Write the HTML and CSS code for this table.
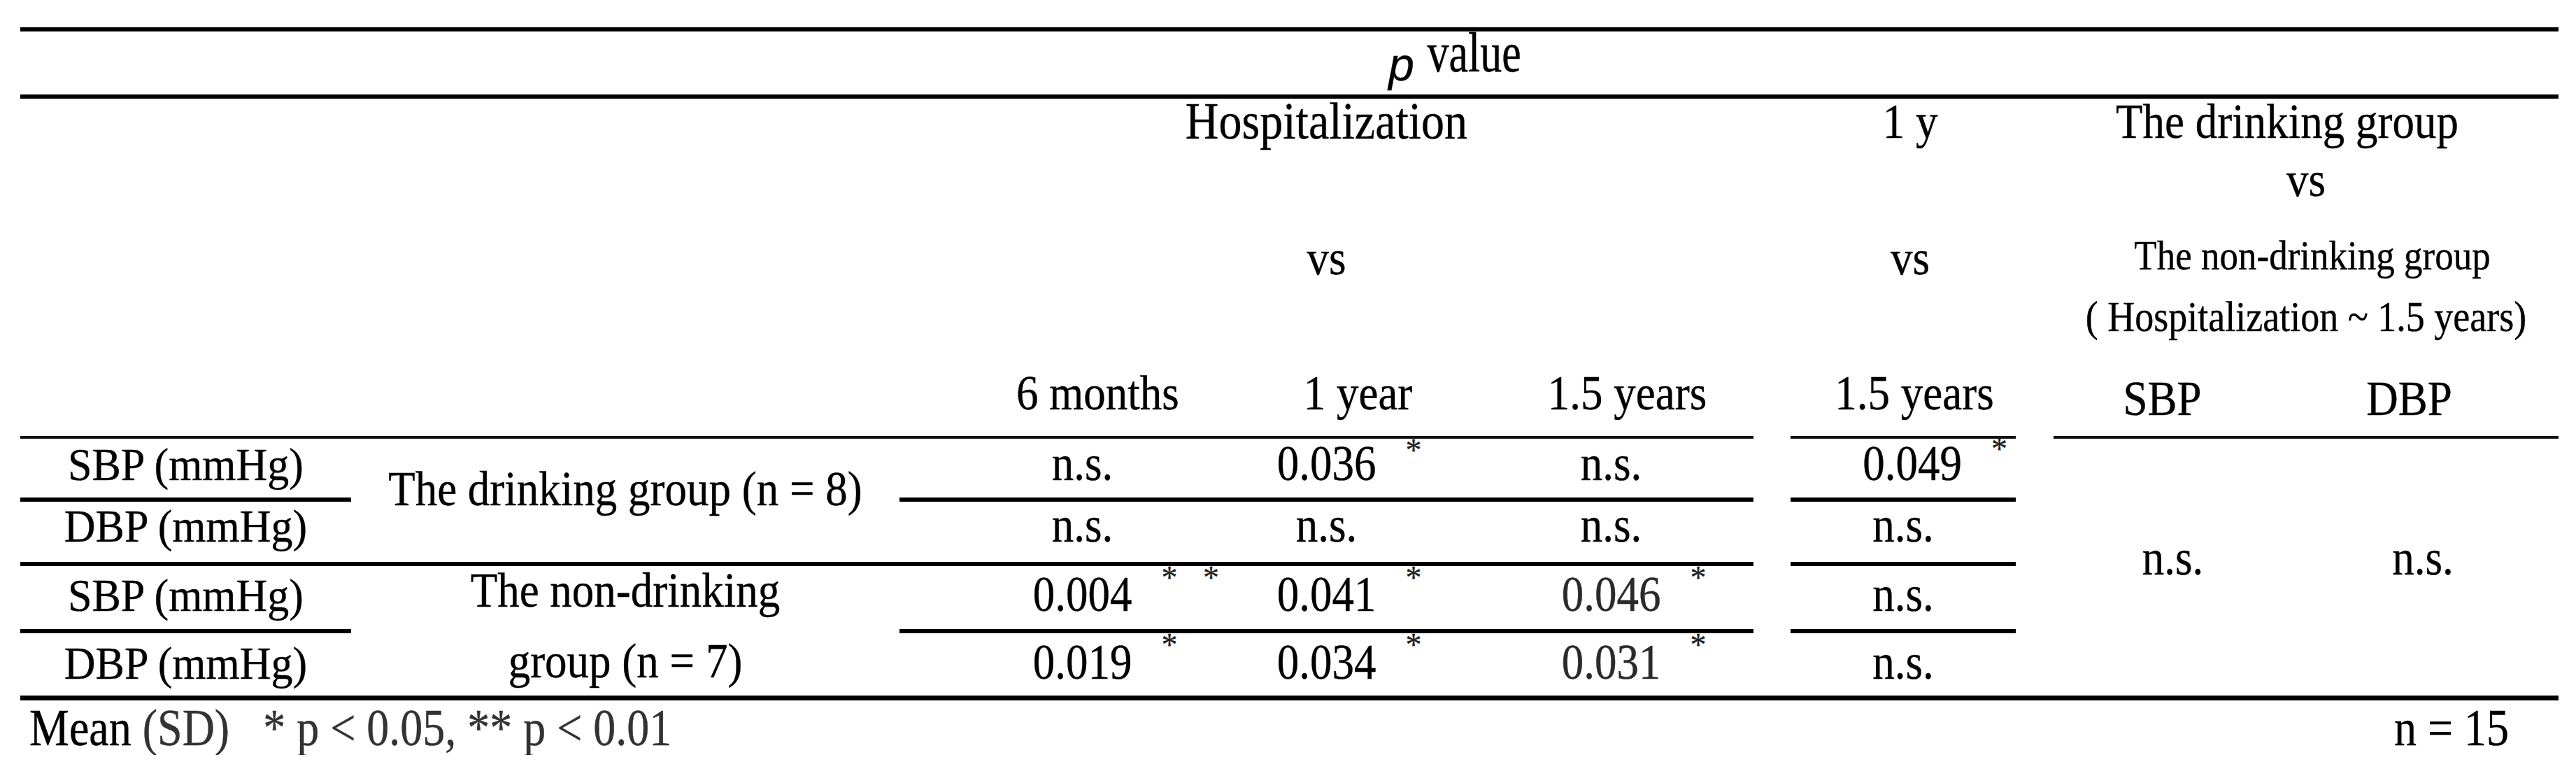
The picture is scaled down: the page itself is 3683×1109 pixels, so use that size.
FILE: index.html
```html
<!DOCTYPE html>
<html lang="en">
<head>
<meta charset="utf-8">
<title>p value table</title>
<link rel="stylesheet" href="styles.css">
</head>
<body>
<div class="tbl">
  <div class="rule c-all y1"></div>
  <div class="pv c-bh y2"><span class="pv-p">p</span> <span class="pv-v">value</span></div>
  <div class="rule c-all y3"></div>

  <div class="grp c-ce y4">
    <div class="hl big"><span class="t">Hospitalization</span></div>
    <div class="hl vs-gap"><span class="t">vs</span></div>
  </div>
  <div class="grp c-f y4 grp-f">
    <div class="hl"><span class="t">1 y</span></div>
    <div class="hl vs-gap"><span class="t">vs</span></div>
  </div>
  <div class="grp c-gh y4">
    <div class="hl g-first"><span class="t">The drinking group</span></div>
    <div class="hl g-vs"><span class="t">vs</span></div>
    <div class="hl g-non"><span class="t">The non-drinking group</span></div>
    <div class="hl g-range"><span class="t">( Hospitalization ~ 1.5 years)</span></div>
  </div>

  <div class="ch c-c y5 ch-c"><span class="t">6 months</span></div>
  <div class="ch c-d y5 ch-d"><span class="t">1 year</span></div>
  <div class="ch c-e y5 ch-e"><span class="t">1.5 years</span></div>
  <div class="ch c-f y5 ch-f"><span class="t">1.5 years</span></div>
  <div class="ch c-g y5 ch-g ch-bp"><span class="t">SBP</span></div>
  <div class="ch c-h y5 ch-h ch-bp"><span class="t">DBP</span></div>

  <div class="rule thin c-ae y6"></div>
  <div class="rule thin c-f y6"></div>
  <div class="rule thin c-gh y6"></div>

  <!-- row 1 -->
  <div class="lab c-a y7"><span class="t">SBP (mmHg)</span></div>
  <div class="d grpl c-b y7-9"><span class="t">The drinking group (n = 8)</span></div>
  <div class="d c-c y7 off-c"><span class="t">n.s.</span></div>
  <div class="d c-d y7"><span class="val"><span class="t">0.036</span><span class="star">*</span></span></div>
  <div class="d c-e y7"><span class="t">n.s.</span></div>
  <div class="d c-f y7 off-f"><span class="val"><span class="t">0.049</span><span class="star star-hi">*</span></span></div>
  <div class="d c-g y7-13 ns-g"><span class="t">n.s.</span></div>
  <div class="d c-h y7-13 ns-h"><span class="t">n.s.</span></div>

  <div class="rule c-a y8"></div>
  <div class="rule c-ce y8"></div>
  <div class="rule c-f y8"></div>

  <!-- row 2 -->
  <div class="lab c-a y9"><span class="t">DBP (mmHg)</span></div>
  <div class="d c-c y9 off-c"><span class="t">n.s.</span></div>
  <div class="d c-d y9"><span class="t">n.s.</span></div>
  <div class="d c-e y9"><span class="t">n.s.</span></div>
  <div class="d c-f y9"><span class="t">n.s.</span></div>

  <div class="rule c-ae y10"></div>
  <div class="rule c-f y10"></div>

  <!-- row 3 -->
  <div class="lab c-a y11"><span class="t">SBP (mmHg)</span></div>
  <div class="d grpl grp-non c-b y11-13">
    <div class="gl"><span class="t">The non-drinking</span></div>
    <div class="gl gl2"><span class="t">group (n = 7)</span></div>
  </div>
  <div class="d c-c y11 off-c"><span class="val"><span class="t">0.004</span><span class="star dbl">* *</span></span></div>
  <div class="d c-d y11"><span class="val"><span class="t">0.041</span><span class="star">*</span></span></div>
  <div class="d c-e y11 gray"><span class="val"><span class="t">0.046</span><span class="star">*</span></span></div>
  <div class="d c-f y11"><span class="t">n.s.</span></div>

  <div class="rule c-a y12"></div>
  <div class="rule c-ce y12"></div>
  <div class="rule c-f y12"></div>

  <!-- row 4 -->
  <div class="lab c-a y13"><span class="t">DBP (mmHg)</span></div>
  <div class="d c-c y13 off-c"><span class="val"><span class="t">0.019</span><span class="star">*</span></span></div>
  <div class="d c-d y13"><span class="val"><span class="t">0.034</span><span class="star">*</span></span></div>
  <div class="d c-e y13 gray"><span class="val"><span class="t">0.031</span><span class="star">*</span></span></div>
  <div class="d c-f y13"><span class="t">n.s.</span></div>

  <div class="rule bottom c-all y14"></div>

  <div class="foot c-all y15">
    <div class="foot-left"><span class="t"><span class="k">Mean</span> <span class="m">(SD)</span></span><span class="t stats">* p &lt; 0.05, ** p &lt; 0.01</span></div>
    <div class="foot-right"><span class="t">n = 15</span></div>
  </div>
</div>
</body>
</html>
```

FILE: styles.css
```css
html, body {
  margin: 0;
  padding: 0;
  background: #ffffff;
}

body {
  font-family: "Liberation Serif", "Times New Roman", serif;
  color: #000;
  -webkit-text-stroke: 0.35px currentColor;
}

.tbl {
  display: grid;
  width: 3629px;
  margin: 39px 0 0 29px;
  grid-template-columns: 473px 784px 407px 407px 407px 53px 322px 54px 361px 361px;
  grid-template-rows: 6px 90px 6px 364px 118px 4px 84px 6px 86px 6px 90px 6px 89px 7px auto;
  font-size: 63px;
}

/* column placement */
.c-all { grid-column: 1 / -1; }
.c-a { grid-column: 1; }
.c-b { grid-column: 2; }
.c-c { grid-column: 3; }
.c-d { grid-column: 4; }
.c-e { grid-column: 5; }
.c-f { grid-column: 7; }
.c-g { grid-column: 9; }
.c-h { grid-column: 10; }
.c-ce { grid-column: 3 / 6; }
.c-ae { grid-column: 1 / 6; }
.c-gh { grid-column: 9 / 11; }
.c-bh { grid-column: 2 / 11; }

/* row placement */
.y1 { grid-row: 1; }
.y2 { grid-row: 2; }
.y3 { grid-row: 3; }
.y4 { grid-row: 4; }
.y5 { grid-row: 5; }
.y6 { grid-row: 6; }
.y7 { grid-row: 7; --pt: 3px; }
.y8 { grid-row: 8; }
.y9 { grid-row: 9; --pt: 1px; }
.y10 { grid-row: 10; }
.y11 { grid-row: 11; --pt: 8px; }
.y12 { grid-row: 12; }
.y13 { grid-row: 13; --pt: 9px; }
.y14 { grid-row: 14; }
.y15 { grid-row: 15; }
.y7-9 { grid-row: 7 / 10; --pt: 39px; }
.y11-13 { grid-row: 11 / 14; --pt: 2px; }
.y7-13 { grid-row: 7 / 14; --pt: 138px; }

/* rules */
.rule { background: #000; }
.rule.thin { background: #111; }

/* vertical stretch of the scanned glyphs */
.t {
  display: inline-block;
  transform: scaleY(1.12);
  transform-origin: 50% 80%;
}

/* p value header */
.pv {
  text-align: center;
  line-height: 90px;
  padding-top: 2px;
  font-family: "Liberation Sans", Arial, sans-serif;
  font-size: 66px;
}
.pv-p { font-style: italic; }
.pv-v {
  display: inline-block;
  font-family: "Liberation Serif", "Times New Roman", serif;
  font-size: 62px;
  line-height: 62px;
  vertical-align: 13px;
  transform: scaleY(1.28);
  transform-origin: 50% 84%;
}

/* group headers */
.grp {
  text-align: center;
}
.grp-f { padding-left: 20px; }
.hl {
  line-height: 70px;
  font-size: 63px;
  white-space: nowrap;
}
.hl.big { font-size: 66px; }
.vs-gap { margin-top: 125px; }
.g-first { padding-right: 54px; }
.g-vs { margin-top: 13px; }
.g-non { margin-top: 38px; font-size: 53px; padding-left: 18px; }
.g-range { margin-top: 18px; font-size: 54px; }

/* column headers */
.ch {
  text-align: center;
  line-height: 70px;
  padding-top: 24px;
  white-space: nowrap;
}
.ch-bp { padding-top: 32px; }
.ch-c { padding-left: 160px; }
.ch-d { padding-left: 90px; }
.ch-e { padding-left: 46px; }
.ch-f { padding-left: 32px; }
.ch-g { padding-right: 50px; }
.ch-h { padding-right: 66px; }

/* left labels */
.lab {
  text-align: center;
  line-height: 70px;
  font-size: 62px;
  padding-top: var(--pt);
  white-space: nowrap;
}
.lab .t { transform: scaleY(1.05); }

/* data cells */
.d {
  text-align: center;
  line-height: 70px;
  padding-top: var(--pt);
  white-space: nowrap;
}
.d .t { transform: scaleY(1.15); }
.grpl .t { transform: scaleY(1.1); }
.gl2 { margin-top: 31px; }
.off-c { padding-left: 116px; }
.off-f { padding-left: 26px; }
.ns-g { padding-right: 20px; }
.ns-h { padding-right: 27px; }
.gray { color: #2a2a2a; }

.val {
  position: relative;
  display: inline-block;
}
.star {
  position: absolute;
  left: 100%;
  top: calc(-6px - var(--pt));
  margin-left: 42px;
  font-size: 46px;
  line-height: 46px;
  color: #222;
  white-space: pre;
}
.star-hi { top: calc(-8px - var(--pt)); }
.star.dbl { word-spacing: 25px; }

/* footer */
.foot {
  display: flex;
  justify-content: space-between;
  align-items: flex-start;
  padding: 8px 71px 0 13px;
  line-height: 70px;
  font-size: 64px;
}
.foot .t { transform: scaleY(1.14); }
.foot .m { color: #333; }
.foot .stats { margin-left: 48px; color: #333; }
```
